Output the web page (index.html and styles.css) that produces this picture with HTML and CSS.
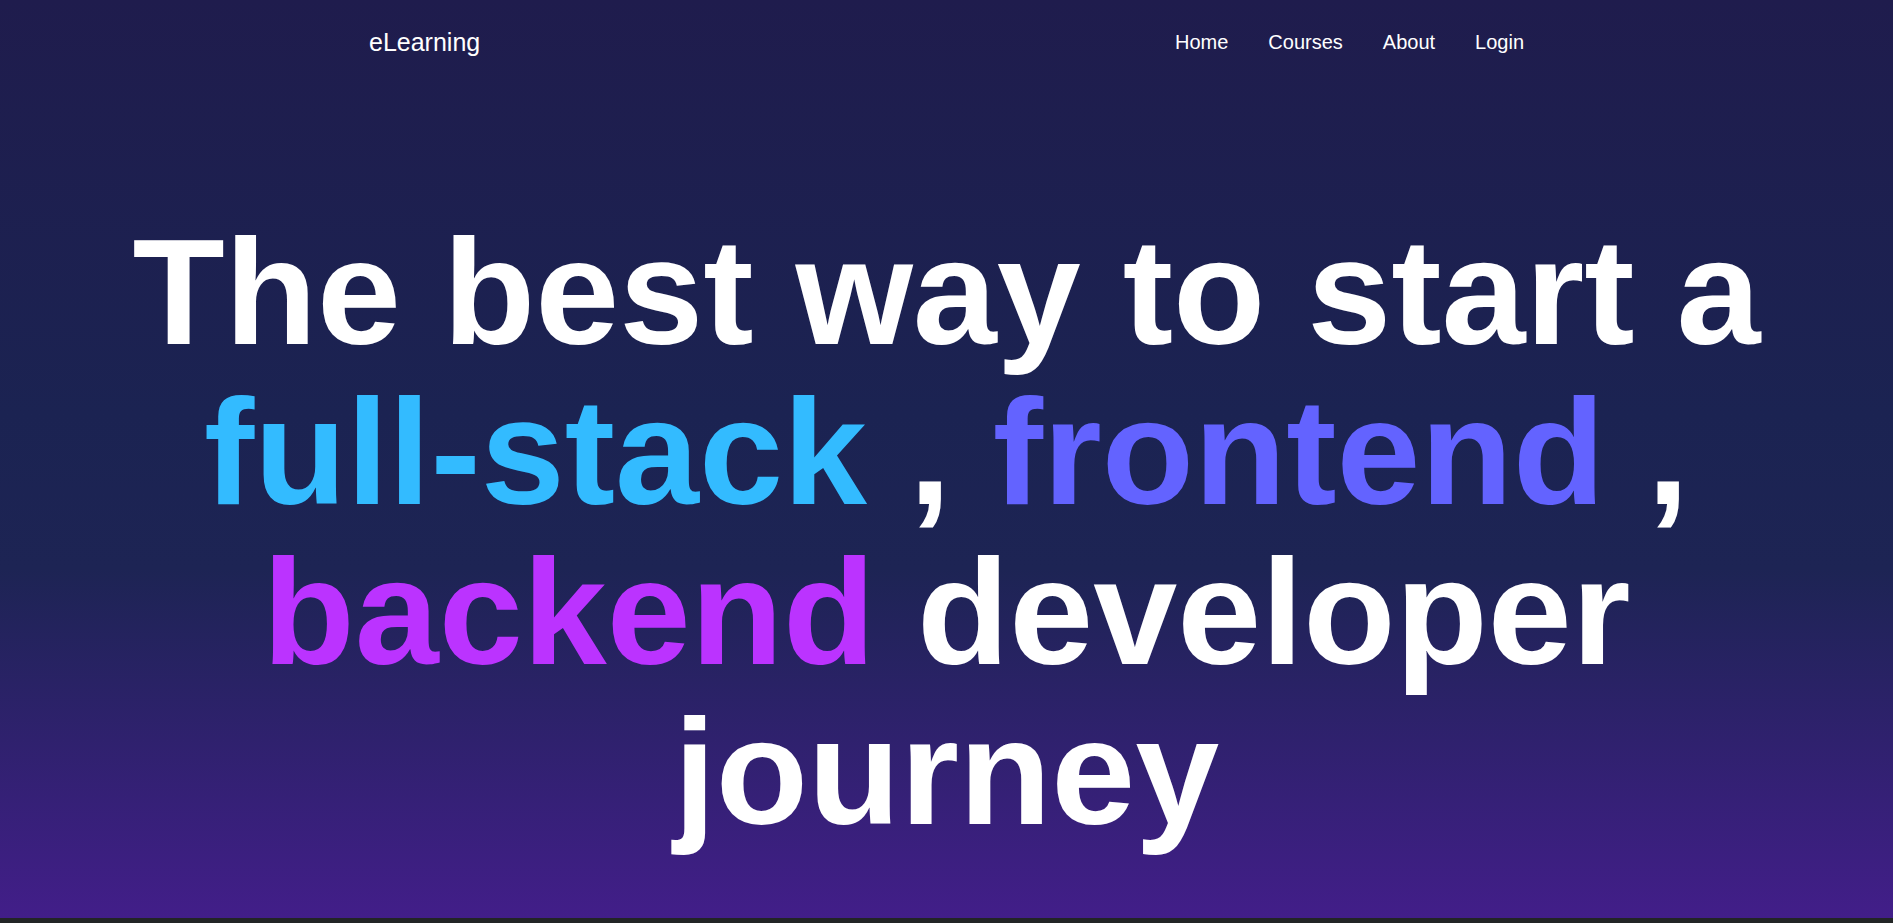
FILE: index.html
```html
<!DOCTYPE html>
<html lang="en">
<head>
<meta charset="utf-8">
<title>eLearning</title>
<link rel="stylesheet" href="styles.css">
</head>
<body>
<section class="hero">
  <nav class="nav">
    <a class="brand" href="#">eLearning</a>
    <ul class="links">
      <li><a href="#">Home</a></li>
      <li><a href="#">Courses</a></li>
      <li><a href="#">About</a></li>
      <li><a href="#">Login</a></li>
    </ul>
  </nav>
  <h1 class="headline">The best way to start a <span class="c-full">full-stack</span> , <span class="c-front">frontend</span> , <span class="c-back">backend</span> developer journey</h1>
</section>
</body>
</html>
```

FILE: styles.css
```css
html, body {
  margin: 0;
  padding: 0;
}
body {
  background: #222526;
  min-height: 100vh;
  font-family: "Liberation Sans", Arial, sans-serif;
  color: #ffffff;
  overflow: hidden;
}
.hero {
  height: 918px;
  background: linear-gradient(to bottom, #1f1c4d 0%, #1b2352 45%, #1d2454 62%, #421e89 100%);
  display: flex;
  flex-direction: column;
}
.nav {
  width: 1155px;
  height: 84px;
  margin: 0 auto;
  display: flex;
  align-items: center;
  justify-content: space-between;
}
.brand {
  color: #ffffff;
  text-decoration: none;
  font-size: 25px;
}
.links {
  list-style: none;
  margin: 0;
  padding: 0;
  display: flex;
  gap: 40px;
}
.links a {
  color: #ffffff;
  text-decoration: none;
  font-size: 20px;
}
.headline {
  margin: 128px 0 0;
  padding: 0 40px;
  text-align: center;
  font-size: 151px;
  line-height: 160px;
  font-weight: 700;
  color: #ffffff;
}
.c-full { color: #33bbff; }
.c-front { color: #6363ff; }
.c-back { color: #bb33ff; }
```
